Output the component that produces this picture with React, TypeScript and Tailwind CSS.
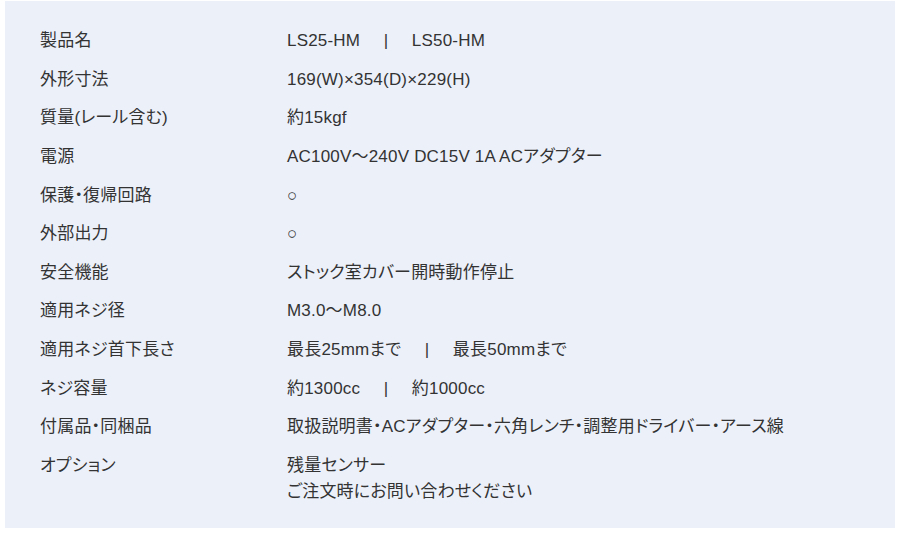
const specs: { label: string; value: React.ReactNode }[] = [
  { label: "製品名", value: <>LS25-HM<Sep />LS50-HM</> },
  { label: "外形寸法", value: "169(W)×354(D)×229(H)" },
  { label: "質量(レール含む)", value: "約15kgf" },
  { label: "電源", value: "AC100V〜240V DC15V 1A ACアダプター" },
  { label: "保護・復帰回路", value: "○" },
  { label: "外部出力", value: "○" },
  { label: "安全機能", value: "ストック室カバー開時動作停止" },
  { label: "適用ネジ径", value: "M3.0〜M8.0" },
  { label: "適用ネジ首下長さ", value: <>最長25mmまで<Sep />最長50mmまで</> },
  { label: "ネジ容量", value: <>約1300cc<Sep />約1000cc</> },
  { label: "付属品・同梱品", value: "取扱説明書・ACアダプター・六角レンチ・調整用ドライバー・アース線" },
  {
    label: "オプション",
    value: (
      <>
        残量センサー
        <br />
        ご注文時にお問い合わせください
      </>
    ),
  },
];

function Sep() {
  return <span className="mx-[23.5px]">|</span>;
}

export default function App() {
  return (
    <div className="w-[900px] h-[534px] bg-white pt-px px-[5px]">
      <div className="h-[527px] bg-[#ecf0f9] pl-[35px] pt-[21px] text-[17px] tracking-[0.2px] text-[#333] font-['Liberation_Sans','Noto_Sans_CJK_JP',sans-serif] [font-feature-settings:'palt']">
        <div className="grid grid-cols-[247px_1fr]">
          {specs.map((s) => (
            <div key={s.label} className="contents">
              <div className="py-[6.3px] leading-[26px]">{s.label}</div>
              <div className="py-[6.3px] leading-[26px]">{s.value}</div>
            </div>
          ))}
        </div>
      </div>
    </div>
  );
}
